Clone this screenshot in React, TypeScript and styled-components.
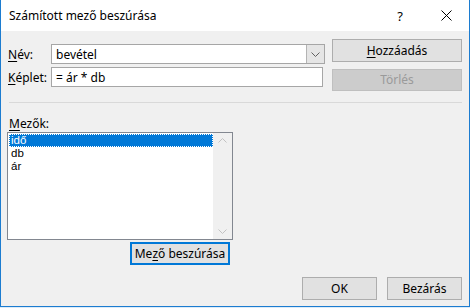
import styled, { createGlobalStyle } from "styled-components";

const GlobalStyle = createGlobalStyle`
  html, body {
    margin: 0;
    padding: 0;
    background: #dcebf8;
  }
  body {
    font-family: "Noto Sans", "Open Sans", sans-serif;
    font-size: 12px;
    color: #000000;
  }
`;

const Window = styled.div`
  width: 470px;
  height: 307px;
  box-sizing: border-box;
  border: 1px solid #1c7cd0;
  border-top: none;
  display: flex;
  flex-direction: column;
  background: #f0f0f0;
`;

const TitleBar = styled.div`
  height: 31px;
  background: #ffffff;
  display: flex;
  align-items: center;
  padding-left: 8px;
  flex-shrink: 0;
`;

const Title = styled.div`
  flex: 1;
  font-size: 12px;
  color: #000000;
`;

const TitleButton = styled.div`
  width: 46px;
  height: 31px;
  display: flex;
  align-items: center;
  justify-content: center;
  font-size: 13px;
`;

const Body = styled.div`
  flex: 1;
  display: flex;
  flex-direction: column;
  padding: 8px 7px 6px 6px;
`;

const TopRow = styled.div`
  display: flex;
  justify-content: space-between;
  height: 52px;
`;

const Form = styled.div`
  display: grid;
  grid-template-columns: 44px auto;
  row-gap: 3px;
  padding-top: 5px;
  align-content: start;
`;

const Label = styled.label`
  display: flex;
  align-items: center;
  padding-left: 1px;
  height: 20px;
`;

const Key = styled.span`
  text-decoration: underline;
  text-underline-offset: 2px;
`;

const Combo = styled.div`
  width: 274px;
  height: 20px;
  box-sizing: border-box;
  border: 1px solid #a6a6a6;
  background: #ffffff;
  display: flex;
`;

const ComboText = styled.div`
  flex: 1;
  display: flex;
  align-items: center;
  padding-left: 4px;
`;

const Field = styled.div`
  width: 272px;
  height: 20px;
  box-sizing: border-box;
  border: 1px solid #a6a6a6;
  background: #ffffff;
  padding-left: 4px;
  display: flex;
  align-items: center;
`;

const DropButton = styled.div`
  width: 17px;
  background: #e5e5e5;
  border-left: 1px solid #b4b4b4;
  display: flex;
  align-items: center;
  justify-content: center;
`;

const SideButtons = styled.div`
  display: flex;
  flex-direction: column;
  gap: 7px;
`;

const Button = styled.div<{ $w: number; $disabled?: boolean; $focus?: boolean }>`
  width: ${(p) => p.$w}px;
  height: 23px;
  box-sizing: border-box;
  border: ${(p) =>
    p.$focus ? "2px solid #0078d7" : p.$disabled ? "1px solid #bfbfbf" : "1px solid #adadad"};
  background: ${(p) => (p.$disabled ? "#cccccc" : "#e1e1e1")};
  color: ${(p) => (p.$disabled ? "#9a9a9a" : "#000000")};
  display: flex;
  align-items: center;
  justify-content: center;
`;

const Separator = styled.div`
  height: 1px;
  background: #d9d9d9;
  margin: 11px 0 0 2px;
`;

const FieldsLabel = styled.div`
  margin-top: 13px;
  height: 15px;
  padding-left: 2px;
  display: flex;
  align-items: center;
`;

const FieldsArea = styled.div`
  display: flex;
  flex-direction: column;
  align-items: flex-end;
  width: 226px;
  margin-top: 1px;
`;

const ListBox = styled.div`
  width: 226px;
  height: 108px;
  box-sizing: border-box;
  border: 1px solid #828790;
  background: #ffffff;
  display: flex;
`;

const Items = styled.div`
  flex: 1;
  padding: 1px 0 0 1px;
  font-family: "Liberation Sans", Arial, sans-serif;
  font-size: 11.5px;
`;

const Item = styled.div<{ $selected?: boolean }>`
  height: 13px;
  line-height: 13px;
  padding-left: 2px;
  box-sizing: border-box;
  background: ${(p) => (p.$selected ? "#0078d7" : "transparent")};
  color: ${(p) => (p.$selected ? "#ffffff" : "#000000")};
  outline: ${(p) => (p.$selected ? "1px dotted #ffffff" : "none")};
  outline-offset: -1px;
`;

const ScrollBar = styled.div`
  width: 19px;
  background: #f0f0f0;
  display: flex;
  flex-direction: column;
  justify-content: space-between;
  align-items: center;
  padding: 5px 0;
`;

const InsertRow = styled.div`
  margin-top: 2px;
  margin-right: 3px;
`;

const Footer = styled.div`
  margin-top: auto;
  display: flex;
  justify-content: flex-end;
  gap: 10px;
`;

const Chevron = ({ up, color }: { up?: boolean; color: string }) => (
  <svg width="9" height="5" viewBox="0 0 9 5">
    <polyline
      points={up ? "0.5,4.5 4.5,0.5 8.5,4.5" : "0.5,0.5 4.5,4.5 8.5,0.5"}
      fill="none"
      stroke={color}
      strokeWidth="1"
    />
  </svg>
);

export default function App() {
  return (
    <>
      <GlobalStyle />
      <Window>
        <TitleBar>
          <Title>Számított mező beszúrása</Title>
          <TitleButton>?</TitleButton>
          <TitleButton>
            <svg width="11" height="11" viewBox="0 0 11 11">
              <path d="M0.5 0.5 L10.5 10.5 M10.5 0.5 L0.5 10.5" stroke="#000" strokeWidth="1" />
            </svg>
          </TitleButton>
        </TitleBar>
        <Body>
          <TopRow>
            <Form>
              <Label>
                <Key>N</Key>év:
              </Label>
              <Combo>
                <ComboText>bevétel</ComboText>
                <DropButton>
                  <Chevron color="#606060" />
                </DropButton>
              </Combo>
              <Label>
                <Key>K</Key>éplet:
              </Label>
              <Field>= ár * db</Field>
            </Form>
            <SideButtons>
              <Button $w={130}>
                <Key>H</Key>ozzáadás
              </Button>
              <Button $w={130} $disabled>
                Törlés
              </Button>
            </SideButtons>
          </TopRow>
          <Separator />
          <FieldsLabel>
            <Key>M</Key>ezők:
          </FieldsLabel>
          <FieldsArea>
            <ListBox>
              <Items>
                <Item $selected>idő</Item>
                <Item>db</Item>
                <Item>ár</Item>
              </Items>
              <ScrollBar>
                <Chevron up color="#c2c2c2" />
                <Chevron color="#c2c2c2" />
              </ScrollBar>
            </ListBox>
            <InsertRow>
              <Button $w={100} $focus>
                Me<Key>z</Key>ő beszúrása
              </Button>
            </InsertRow>
          </FieldsArea>
          <Footer>
            <Button $w={75}>OK</Button>
            <Button $w={75}>Bezárás</Button>
          </Footer>
        </Body>
      </Window>
    </>
  );
}
